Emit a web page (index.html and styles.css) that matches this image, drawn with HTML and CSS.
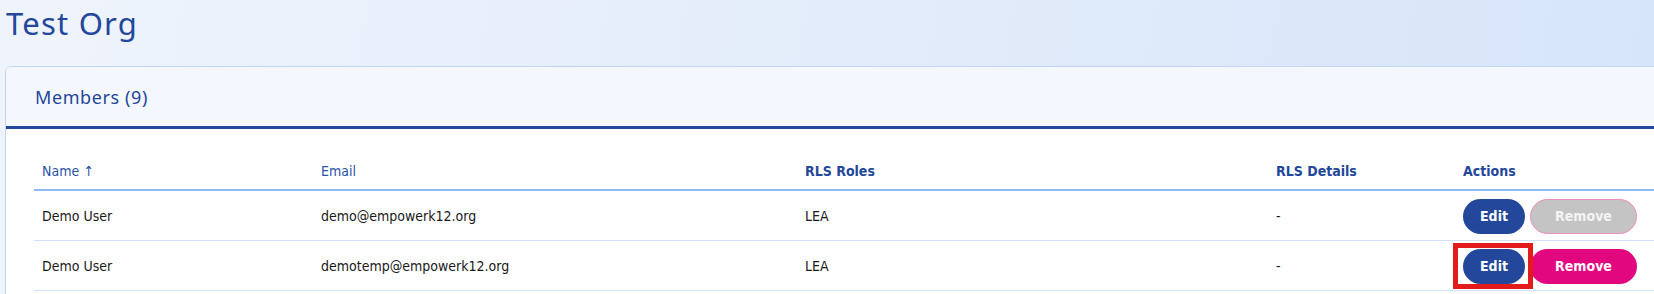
FILE: index.html
```html
<!DOCTYPE html>
<html lang="en">
<head>
    <meta charset="UTF-8">
    <meta name="viewport" content="width=device-width, initial-scale=1.0">
    <title>Test Org</title>
    <link rel="stylesheet" href="styles.css">
</head>
<body>
    <div class="page">
        <h1 class="org-title">Test Org</h1>
        <div class="card">
            <div class="card-header">
                <h2>Members (9)</h2>
            </div>
            <div class="card-body">
                <table class="members">
                    <colgroup>
                        <col class="col-name">
                        <col class="col-email">
                        <col class="col-roles">
                        <col class="col-details">
                        <col class="col-actions">
                    </colgroup>
                    <thead>
                        <tr>
                            <th class="sortable">Name ↑</th>
                            <th class="sortable">Email</th>
                            <th>RLS Roles</th>
                            <th>RLS Details</th>
                            <th>Actions</th>
                        </tr>
                    </thead>
                    <tbody>
                        <tr>
                            <td>Demo User</td>
                            <td>demo@empowerk12.org</td>
                            <td>LEA</td>
                            <td>-</td>
                            <td>
                                <div class="actions">
                                    <button class="btn btn-edit" type="button">Edit</button>
                                    <button class="btn btn-remove" type="button" disabled>Remove</button>
                                </div>
                            </td>
                        </tr>
                        <tr>
                            <td>Demo User</td>
                            <td>demotemp@empowerk12.org</td>
                            <td>LEA</td>
                            <td>-</td>
                            <td>
                                <div class="actions">
                                    <button class="btn btn-edit highlight" type="button">Edit</button>
                                    <button class="btn btn-remove" type="button">Remove</button>
                                </div>
                            </td>
                        </tr>
                    </tbody>
                </table>
            </div>
        </div>
    </div>
</body>
</html>
```

FILE: styles.css
```css
* {
    margin: 0;
    padding: 0;
    box-sizing: border-box;
}
body {
    background: linear-gradient(100deg, #eff4fc 0%, #e3ecfa 50%, #d6e5f9 100%);
    min-height: 100vh;
    overflow: hidden;
    font-family: 'DejaVu Sans', Verdana, sans-serif;
}
.page {
    padding: 3px 0 0 5px;
}
.org-title {
    font-family: 'Noto Sans', sans-serif;
    font-weight: 400;
    font-size: 31px;
    line-height: 40px;
    color: #23479a;
    padding-left: 1px;
    margin-bottom: 23px;
    letter-spacing: 1.2px;
}
.card {
    width: calc(100% + 20px);
    border: 1px solid #c3d7f3;
    border-radius: 6px;
    background: #fff;
    overflow: hidden;
}
.card-header {
    height: 62px;
    background: #f4f8fe;
    border-bottom: 3px solid #23479a;
    padding-left: 29px;
    display: flex;
    align-items: center;
}
.card-header h2 {
    font-family: 'Noto Sans', sans-serif;
    font-weight: 400;
    font-size: 18px;
    color: #23479a;
    letter-spacing: 0.6px;
}
.card-body {
    padding: 21px 0 40px 28px;
}
.members {
    border-collapse: collapse;
    table-layout: fixed;
    width: 1640px;
    font-size: 14px;
    font-stretch: condensed;
}
.col-name { width: 279px; }
.col-email { width: 484px; }
.col-roles { width: 471px; }
.col-details { width: 187px; }
th {
    text-align: left;
    height: 40px;
    padding: 2px 8px 0;
    color: #23479a;
    font-weight: bold;
    border-bottom: 2px solid #90baf5;
}
th.sortable {
    font-weight: normal;
    color: #2a52a6;
}
td {
    height: 50px;
    padding: 2px 8px 0;
    color: #1a1a1a;
    border-bottom: 1px solid #cfe0f7;
}
.actions {
    display: flex;
    gap: 5px;
}
.btn {
    height: 35px;
    border-radius: 18px;
    border: 1px solid transparent;
    color: #fff;
    font-family: 'DejaVu Sans', Verdana, sans-serif;
    font-weight: bold;
    font-size: 14px;
    font-stretch: condensed;
    cursor: pointer;
}
.btn-edit {
    width: 62px;
    background: #23479a;
}
.btn-remove {
    width: 107px;
    background: #e3077f;
}
.btn-remove:disabled {
    background: #c4c4c4;
    border-color: #f08cc0;
    color: #f4f4f4;
    cursor: default;
}
.highlight {
    position: relative;
}
.highlight::after {
    content: "";
    position: absolute;
    top: -7px;
    right: -9px;
    bottom: -6px;
    left: -11px;
    border: 5px solid #e41b1b;
}
```
